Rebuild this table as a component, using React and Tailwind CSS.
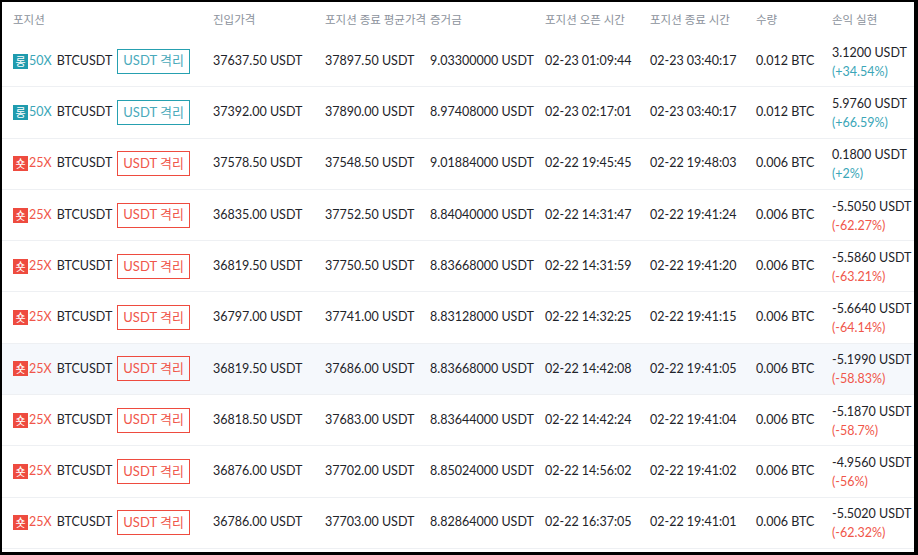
import React from "react";

const rows = [
  { side: "long", lev: "50X", entry: "37637.50", close: "37897.50", margin: "9.03300000", open: "02-23 01:09:44", end: "02-23 03:40:17", qty: "0.012", pnl: "3.1200", pct: "(+34.54%)" },
  { side: "long", lev: "50X", entry: "37392.00", close: "37890.00", margin: "8.97408000", open: "02-23 02:17:01", end: "02-23 03:40:17", qty: "0.012", pnl: "5.9760", pct: "(+66.59%)" },
  { side: "short", lev: "25X", entry: "37578.50", close: "37548.50", margin: "9.01884000", open: "02-22 19:45:45", end: "02-22 19:48:03", qty: "0.006", pnl: "0.1800", pct: "(+2%)", up: true },
  { side: "short", lev: "25X", entry: "36835.00", close: "37752.50", margin: "8.84040000", open: "02-22 14:31:47", end: "02-22 19:41:24", qty: "0.006", pnl: "-5.5050", pct: "(-62.27%)" },
  { side: "short", lev: "25X", entry: "36819.50", close: "37750.50", margin: "8.83668000", open: "02-22 14:31:59", end: "02-22 19:41:20", qty: "0.006", pnl: "-5.5860", pct: "(-63.21%)" },
  { side: "short", lev: "25X", entry: "36797.00", close: "37741.00", margin: "8.83128000", open: "02-22 14:32:25", end: "02-22 19:41:15", qty: "0.006", pnl: "-5.6640", pct: "(-64.14%)" },
  { side: "short", lev: "25X", entry: "36819.50", close: "37686.00", margin: "8.83668000", open: "02-22 14:42:08", end: "02-22 19:41:05", qty: "0.006", pnl: "-5.1990", pct: "(-58.83%)", hl: true },
  { side: "short", lev: "25X", entry: "36818.50", close: "37683.00", margin: "8.83644000", open: "02-22 14:42:24", end: "02-22 19:41:04", qty: "0.006", pnl: "-5.1870", pct: "(-58.7%)" },
  { side: "short", lev: "25X", entry: "36876.00", close: "37702.00", margin: "8.85024000", open: "02-22 14:56:02", end: "02-22 19:41:02", qty: "0.006", pnl: "-4.9560", pct: "(-56%)" },
  { side: "short", lev: "25X", entry: "36786.00", close: "37703.00", margin: "8.82864000", open: "02-22 16:37:05", end: "02-22 19:41:01", qty: "0.006", pnl: "-5.5020", pct: "(-62.32%)" },
];

const cols = "grid grid-cols-[211px_112px_105px_115px_105px_106px_76px_82px]";

function Position({ r }) {
  const long = r.side === "long";
  return (
    <div className="flex items-center">
      <span
        className={`w-[15px] h-[15px] flex items-center justify-center text-[11px] leading-none text-white ${
          long ? "bg-[#1f9bae]" : "bg-[#ee4b3f]"
        }`}
      >
        {long ? "롱" : "숏"}
      </span>
      <span className={`ml-[1px] ${long ? "text-[#3aa6b8]" : "text-[#f0564a]"}`}>{r.lev}</span>
      <span className="ml-[5px] text-[#1e2329]">BTCUSDT</span>
      <span
        className={`ml-[5px] h-[25px] px-[5px] flex items-center text-[13px] border ${
          long ? "border-[#26a0b0] text-[#4aaabb]" : "border-[#ee4b3f] text-[#f0564a]"
        }`}
      >
        USDT 격리
      </span>
    </div>
  );
}

export default function App() {
  return (
    <div
      className="w-[918px] h-[555px] bg-white border-t-2 border-l-2 border-r-4 border-b-[3px] border-black overflow-hidden text-[12.5px] text-[#1e2329]"
      style={{ fontFamily: "Lato, 'Noto Sans CJK KR', sans-serif" }}
    >
      <div className={`${cols} h-[34px] items-center text-[#8c929c] text-[11.5px] whitespace-nowrap pt-[1px]`}>
        <div className="pl-[11px]">포지션</div>
        <div>진입가격</div>
        <div>포지션 종료 평균가격</div>
        <div>증거금</div>
        <div>포지션 오픈 시간</div>
        <div>포지션 종료 시간</div>
        <div>수량</div>
        <div>손익 실현</div>
      </div>
      {rows.map((r, i) => {
        const up = r.side === "long" || r.up;
        return (
          <div
            key={i}
            className={`${cols} h-[51.3px] items-center border-b border-[#eef0f3] ${r.hl ? "bg-[#f5f8fc]" : ""}`}
          >
            <div className="pl-[11px]">
              <Position r={r} />
            </div>
            <div>{r.entry} USDT</div>
            <div>{r.close} USDT</div>
            <div>{r.margin} USDT</div>
            <div>{r.open}</div>
            <div>{r.end}</div>
            <div>{r.qty} BTC</div>
            <div className="flex flex-col leading-[19px] pt-[1px]">
              <span>{r.pnl} USDT</span>
              <span className={up ? "text-[#3aa6b8]" : "text-[#f0564a]"}>{r.pct}</span>
            </div>
          </div>
        );
      })}
    </div>
  );
}
